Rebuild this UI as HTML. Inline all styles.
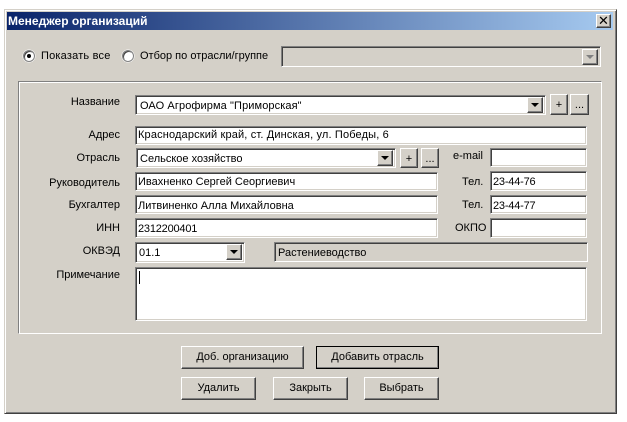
<!DOCTYPE html>
<html><head><meta charset="utf-8"><style>
html,body{margin:0;padding:0;width:627px;height:422px;overflow:hidden;background:#fff}
*{box-sizing:border-box}
body{font:11px "Liberation Sans","DejaVu Sans",sans-serif;color:#000;position:relative}
div{position:absolute;white-space:nowrap}
.win{left:4px;top:9px;width:613px;height:405px;background:#d4d0c8;border:1px solid;border-color:#d4d0c8 #404040 #404040 #d4d0c8;box-shadow:inset 1px 1px 0 #fff,inset -1px -1px 0 #808080}
.title{left:7px;top:12px;width:606px;height:18px;background:linear-gradient(90deg,#0a246a,#a6caf0);color:#fff;font-weight:bold;font-size:12px;line-height:18px;padding-left:1px}
.f{background:#fff;border:1px solid;border-color:#808080 #fff #fff #808080;box-shadow:inset 1px 1px 0 #404040,inset -1px -1px 0 #d4d0c8;line-height:20px;padding-left:3px}
.b{background:#d4d0c8;border:1px solid;border-color:#fff #404040 #404040 #fff;box-shadow:inset -1px -1px 0 #808080;text-align:center;line-height:20px}
.l{text-align:right;width:100px;left:20px;line-height:14px}
.t{line-height:14px}
.arr{width:0;height:0;border:4px solid transparent;border-top-color:#000;border-bottom:0;left:3px;top:5px}
.dd{width:16px;height:16px;top:1px;right:2px}
.g{left:18px;top:81px;width:584px;height:253px;border:1px solid;border-color:#808080 #fff #fff #808080;box-shadow:inset 1px 1px 0 #fff,1px 1px 0 #808080 inset}
.r{width:12px;height:12px;border-radius:50%;background:#fff;border:1px solid #808080;box-shadow:inset 1px 1px 0 #404040,0 0 0 0.5px #fff}
.r i{position:absolute;left:3px;top:3px;width:4px;height:4px;border-radius:50%;background:#000}
</style></head><body>
<div class="win"></div>
<div class="title">Менеджер организаций</div>
<div class="b" style="left:596px;top:14px;width:15px;height:14px;font-weight:bold;font-size:13px;line-height:12px">✕</div>

<div class="r" style="left:23px;top:50px"><i></i></div>
<div class="t" style="left:41px;top:49px;letter-spacing:.2px">Показать все</div>
<div class="r" style="left:122px;top:50px"></div>
<div class="t" style="left:140px;top:49px">Отбор по отрасли/группе</div>
<div class="f" style="left:281px;top:46px;width:320px;height:21px;background:#d4d0c8"><div class="b dd" style="top:2px"><div class="arr" style="border-top-color:#808080"></div></div></div>

<div class="g"></div>

<div class="l" style="top:95px">Название</div>
<div class="f" style="left:135px;top:95px;width:411px;height:20px;padding-left:4px;letter-spacing:.1px">ОАО Агрофирма "Приморская"<div class="b dd"><div class="arr"></div></div></div>
<div class="b" style="left:550px;top:94px;width:18px;height:21px">+</div>
<div class="b" style="left:570px;top:94px;width:19px;height:21px">...</div>

<div class="l" style="top:128px">Адрес</div>
<div class="f" style="left:135px;top:126px;width:452px;height:19px;padding-left:2px;letter-spacing:.15px;line-height:16px">Краснодарский край, ст. Динская, ул. Победы, 6</div>

<div class="l" style="top:151px">Отрасль</div>
<div class="f" style="left:136px;top:148px;width:260px;height:20px">Сельское хозяйство<div class="b dd"><div class="arr"></div></div></div>
<div class="b" style="left:400px;top:148px;width:18px;height:20px">+</div>
<div class="b" style="left:421px;top:148px;width:18px;height:20px">...</div>
<div class="t" style="left:453px;top:149px">e-mail</div>
<div class="f" style="left:490px;top:148px;width:97px;height:19px"></div>

<div class="l" style="top:176px">Руководитель</div>
<div class="f" style="left:135px;top:172px;width:303px;height:19px;padding-left:2px;line-height:18px">Ивахненко Сергей Сеоргиевич</div>
<div class="t" style="left:462px;top:175px">Тел.</div>
<div class="f" style="left:490px;top:171px;width:97px;height:20px;padding-left:2px;letter-spacing:-.2px">23-44-76</div>

<div class="l" style="top:198px">Бухгалтер</div>
<div class="f" style="left:135px;top:195px;width:303px;height:19px;padding-left:2px">Литвиненко Алла Михайловна</div>
<div class="t" style="left:462px;top:198px">Тел.</div>
<div class="f" style="left:490px;top:195px;width:97px;height:19px;padding-left:2px;letter-spacing:-.2px">23-44-77</div>

<div class="l" style="top:221px">ИНН</div>
<div class="f" style="left:135px;top:218px;width:303px;height:20px;padding-left:2px;letter-spacing:-.2px">2312200401</div>
<div class="t" style="left:455px;top:221px">ОКПО</div>
<div class="f" style="left:490px;top:218px;width:97px;height:20px"></div>

<div class="l" style="top:244px">ОКВЭД</div>
<div class="f" style="left:135px;top:242px;width:110px;height:21px">01.1<div class="b dd"><div class="arr"></div></div></div>
<div class="f" style="left:274px;top:242px;width:314px;height:20px;background:#d4d0c8">Растениеводство</div>

<div class="l" style="top:268px">Примечание</div>
<div class="f" style="left:135px;top:267px;width:452px;height:54px"><div style="left:3px;top:3px;width:1px;height:13px;background:#000"></div></div>

<div class="b" style="left:181px;top:346px;width:123px;height:23px">Доб. организацию</div>
<div class="b" style="left:316px;top:346px;width:123px;height:23px;outline:1px solid #000;outline-offset:-1px">Добавить отрасль</div>
<div class="b" style="left:181px;top:377px;width:75px;height:23px">Удалить</div>
<div class="b" style="left:273px;top:377px;width:75px;height:23px">Закрыть</div>
<div class="b" style="left:364px;top:377px;width:75px;height:23px">Выбрать</div>
</body></html>
